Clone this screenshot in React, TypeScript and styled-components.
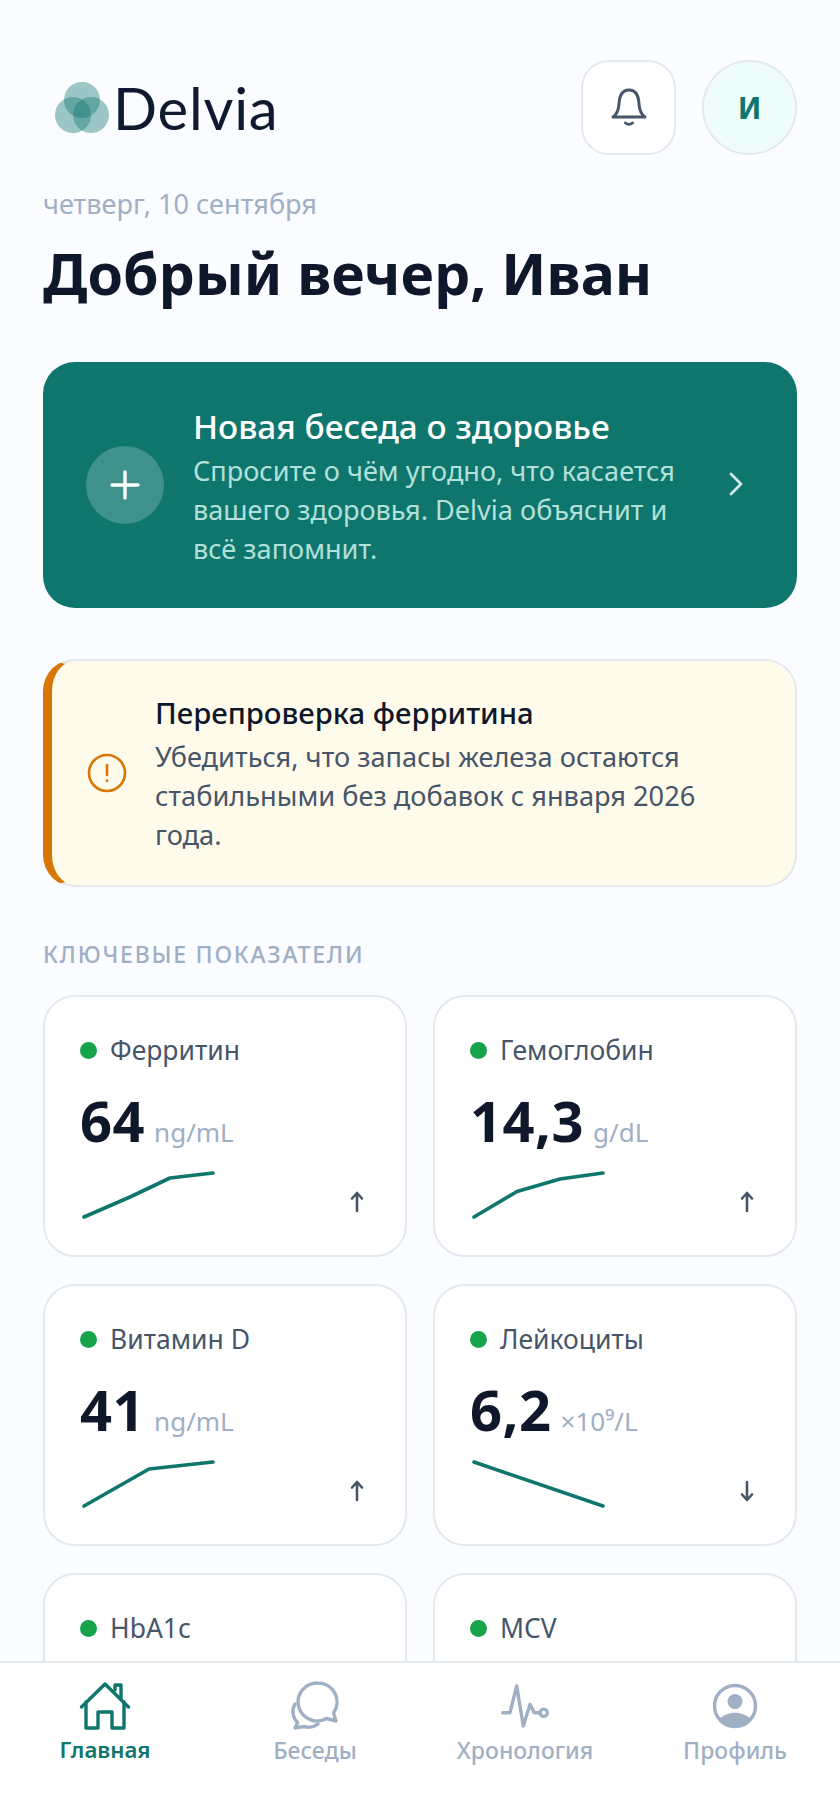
import React from "react";
import styled, { createGlobalStyle } from "styled-components";

const Global = createGlobalStyle`
  html, body { margin: 0; padding: 0; background: #fafcff; }
  body { font-family: "Noto Sans", "Liberation Sans", sans-serif; }
  * { box-sizing: border-box; }
`;

const Screen = styled.div`
  width: 840px; height: 1818px; display: flex; flex-direction: column; overflow: hidden; background: #fafcff;
`;
const Main = styled.main`
  flex: 1; min-height: 0; overflow: hidden; padding: 60px 43px 0;
`;
const Header = styled.header`
  display: flex; align-items: center; justify-content: space-between; height: 95px;
`;
const Logo = styled.div`
  display: flex; align-items: center; gap: 3px; margin-left: 11px; padding-top: 2px;
`;
const LogoText = styled.span`
  font-family: Lato, sans-serif; font-size: 58px; font-weight: 400; color: #0f1a30; letter-spacing: .8px; line-height: 1; margin-top: -2px;
`;
const HeaderActions = styled.div`
  display: flex; gap: 26px;
`;
const BellButton = styled.button`
  width: 95px; height: 95px; border: 2px solid #e4e9f0; border-radius: 28px; background: #fff;
  display: flex; align-items: center; justify-content: center; padding: 0;
`;
const Avatar = styled.div`
  width: 95px; height: 95px; border: 2px solid #e4e9f0; border-radius: 50%; background: #effdfa;
  display: flex; align-items: center; justify-content: center; color: #0f766e; font-size: 30px; font-weight: 700;
`;
const DateLine = styled.div`
  margin-top: 29px; font-size: 27.100px; line-height: 40px; color: #9fafc4;
`;
const Title = styled.h1`
  margin: 11px 0 0; font-size: 57.200px; line-height: 76px; font-weight: 700; color: #0f172a;
`;
const Hero = styled.div`
  margin-top: 51px; height: 246px; border-radius: 32px; background: #0f766e; padding: 0 54px 0 43px;
  display: flex; align-items: center;
`;
const PlusCircle = styled.div`
  width: 78px; height: 78px; border-radius: 50%; background: rgba(255,255,255,.2); flex: none;
  display: flex; align-items: center; justify-content: center;
`;
const HeroBody = styled.div`
  flex: 1; margin-left: 29px;
`;
const HeroTitle = styled.div`
  font-size: 33.400px; line-height: 49px; font-weight: 500; color: #fff;
`;
const HeroText = styled.div`
  font-size: 27.100px; line-height: 39px; color: #b3e0d8; width: 500px;
`;
const Notice = styled.div`
  margin-top: 51px; height: 228px; border-radius: 32px; background: #fffbeb;
  border: 2px solid #e4e9f0; border-left: 9px solid #d97706; padding: 0 32px 0 35px;
  display: flex; align-items: center; gap: 28px;
`;
const NoticeTitle = styled.div`
  font-size: 29.300px; line-height: 40px; margin-bottom: 4px; font-weight: 500; color: #0f172a;
`;
const NoticeText = styled.div`
  font-size: 27.200px; line-height: 39px; color: #475569;
`;
const SectionLabel = styled.div`
  margin-top: 51px; font-size: 23px; line-height: 32px; font-weight: 500; letter-spacing: 1.77px; color: #9fafc4; text-transform: uppercase;
`;
const Grid = styled.div`
  margin-top: 25px; display: grid; grid-template-columns: 1fr 1fr; gap: 27px 26px;
`;
const Card = styled.div`
  height: 262px; background: #fff; border: 2px solid #e4e9f0; border-radius: 32px; padding: 36px 35px 0;
`;
const CardHead = styled.div`
  display: flex; align-items: center; gap: 13px; height: 34px;
`;
const Dot = styled.span`
  width: 17px; height: 17px; border-radius: 50%; background: #16a34a; flex: none;
`;
const CardLabel = styled.span`
  font-size: 26.500px; line-height: 34px; color: #475569;
`;
const ValueRow = styled.div`
  margin-top: 18px; display: flex; align-items: baseline; gap: 9px;
`;
const Value = styled.span`
  font-size: 56px; line-height: 70px; font-weight: 700; letter-spacing: .5px; color: #0f172a;
`;
const Unit = styled.span`
  font-size: 26px; color: #9fafc4;
`;
const CardFoot = styled.div`
  display: flex; justify-content: space-between; align-items: flex-end; margin-top: 16px; padding-right: 6px;
`;
const Nav = styled.nav`
  flex: none; height: 157px; background: #fff; border-top: 2px solid #e4e9f0;
  display: grid; grid-template-columns: repeat(4, 1fr);
`;
const NavItem = styled.div<{ $active?: boolean }>`
  padding-top: 18px; display: flex; flex-direction: column; align-items: center;
  color: ${p => (p.$active ? "#0f766e" : "#9fafc4")};
`;
const NavLabel = styled.span<{ $active?: boolean }>`
  font-size: ${p => (p.$active ? "22.200px" : "23px")}; line-height: 30px; font-weight: ${p => (p.$active ? 600 : 500)};
`;

const LogoMark = () => (
  <svg width="56" height="56" viewBox="0 0 56 56" fill="#0f766e" fillOpacity=".4">
    <circle cx="28" cy="19" r="18" />
    <circle cx="19" cy="34" r="18" />
    <circle cx="37" cy="34" r="18" />
  </svg>
);
const Bell = () => (
  <svg width="36" height="40" viewBox="0 0 36 40" fill="none" stroke="#475569" strokeWidth="3" strokeLinecap="round" strokeLinejoin="round">
    <path d="M2 29h32c-3-2-5.500-6-6-13C27.500 6 24 2 18 2S8.500 6 8 16c-.5 7-3 11-6 13z" />
    <path d="M14.500 35c2 1.800 5 1.800 7 0" />
  </svg>
);
const Plus = () => (
  <svg width="30" height="30" viewBox="0 0 30 30" stroke="#fff" strokeWidth="3.400" strokeLinecap="round">
    <path d="M15 2v26M2 15h26" />
  </svg>
);
const Chevron = () => (
  <svg width="14" height="24" viewBox="0 0 14 24" fill="none" stroke="#d4eee9" strokeWidth="2.800" strokeLinecap="round" strokeLinejoin="round" style={{ marginTop: -2 }}>
    <path d="M2 2l10 10L2 22" />
  </svg>
);
const Warn = () => (
  <svg width="40" height="40" viewBox="0 0 40 40" fill="none" stroke="#d97706" strokeWidth="2.600" strokeLinecap="round" style={{ flex: "none" }}>
    <circle cx="20" cy="20" r="18" />
    <path d="M20 12v10M20 27.500v.5" />
  </svg>
);
const Spark = ({ d }: { d: string }) => (
  <svg width="136" height="48" viewBox="0 0 136 48" fill="none" stroke="#0f766e" strokeWidth="3.600" strokeLinecap="round" strokeLinejoin="round">
    <path d={d} />
  </svg>
);
const Arrow = ({ down }: { down?: boolean }) => (
  <svg width="14" height="22" viewBox="0 0 14 22" fill="none" stroke="#475569" strokeWidth="2.600" strokeLinecap="round" strokeLinejoin="round" style={{ marginBottom: 6 }}>
    <path d={down ? "M7 2v18M2 14.500l5 5.500 5-5.500" : "M7 20V2M2 7.500L7 2l5 5.500"} />
  </svg>
);
const I = { width: 54, height: 54, viewBox: "0 0 54 54", fill: "none", stroke: "currentColor", strokeWidth: 3.4, strokeLinecap: "round" as const, strokeLinejoin: "round" as const };
const HomeIcon = () => (
  <svg {...I}>
    <path d="M3.500 26L27 3l23.500 23" />
    <path d="M8 21v26h12V31h14v16h12V21M37 9V4h6v13" />
  </svg>
);
const ChatIcon = () => (
  <svg {...I}>
    <g transform="translate(3 0)">
      <path d="M27 2a19 19 0 0 1 15.500 30l2.500 8-9.500-2.500A19 19 0 1 1 27 2z" />
      <path d="M4 23C1 28 1 36 6.700 41.500L4 47l9-1.500c5 1.500 10 .5 14-2.500" />
    </g>
  </svg>
);
const PulseIcon = () => (
  <svg {...I}>
    <path d="M4.700 31.700H12L18.700 5l6.600 40L32 23.300l4.300 8.400h5" />
    <circle cx="45.700" cy="31.700" r="3.600" />
  </svg>
);
const ProfileIcon = () => (
  <svg {...I}>
    <circle cx="27" cy="25" r="20.500" />
    <circle cx="27" cy="20.500" r="7.500" fill="currentColor" stroke="none" />
    <path d="M11 38c4-4 10-6.300 16-6.300S39 34 43 38a20.500 20.500 0 0 1-32 0z" fill="currentColor" stroke="none" />
  </svg>
);

type Metric = { name: string; value?: string; unit?: string; d?: string; down?: boolean };
const metrics: Metric[] = [
  { name: "Ферритин", value: "64", unit: "ng/mL", d: "M4 46L50 26 90 7l43-5" },
  { name: "Гемоглобин", value: "14,3", unit: "g/dL", d: "M4 46L47 20.500 90 8l43-6" },
  { name: "Витамин D", value: "41", unit: "ng/mL", d: "M4 46L69 9l64-7" },
  { name: "Лейкоциты", value: "6,2", unit: "×10⁹/L", d: "M4 2l129 44", down: true },
  { name: "HbA1c" },
  { name: "MCV" },
];
const tabs = [
  { label: "Главная", icon: <HomeIcon />, active: true },
  { label: "Беседы", icon: <ChatIcon /> },
  { label: "Хронология", icon: <PulseIcon /> },
  { label: "Профиль", icon: <ProfileIcon /> },
];

export default function App() {
  return (
    <Screen>
      <Global />
      <Main>
        <Header>
          <Logo>
            <LogoMark />
            <LogoText>Delvia</LogoText>
          </Logo>
          <HeaderActions>
            <BellButton aria-label="Уведомления"><Bell /></BellButton>
            <Avatar>И</Avatar>
          </HeaderActions>
        </Header>
        <DateLine>четверг, 10 сентября</DateLine>
        <Title>Добрый вечер, Иван</Title>
        <Hero>
          <PlusCircle><Plus /></PlusCircle>
          <HeroBody>
            <HeroTitle>Новая беседа о здоровье</HeroTitle>
            <HeroText>Спросите о чём угодно, что касается вашего здоровья. Delvia объяснит и всё запомнит.</HeroText>
          </HeroBody>
          <Chevron />
        </Hero>
        <Notice>
          <Warn />
          <div>
            <NoticeTitle>Перепроверка ферритина</NoticeTitle>
            <NoticeText>Убедиться, что запасы железа остаются стабильными без добавок с января 2026 года.</NoticeText>
          </div>
        </Notice>
        <SectionLabel>Ключевые показатели</SectionLabel>
        <Grid>
          {metrics.map(m => (
            <Card key={m.name}>
              <CardHead><Dot /><CardLabel>{m.name}</CardLabel></CardHead>
              {m.value && (
                <>
                  <ValueRow><Value>{m.value}</Value><Unit>{m.unit}</Unit></ValueRow>
                  <CardFoot><Spark d={m.d!} /><Arrow down={m.down} /></CardFoot>
                </>
              )}
            </Card>
          ))}
        </Grid>
      </Main>
      <Nav>
        {tabs.map(t => (
          <NavItem key={t.label} $active={t.active}>
            {t.icon}
            <NavLabel $active={t.active}>{t.label}</NavLabel>
          </NavItem>
        ))}
      </Nav>
    </Screen>
  );
}
